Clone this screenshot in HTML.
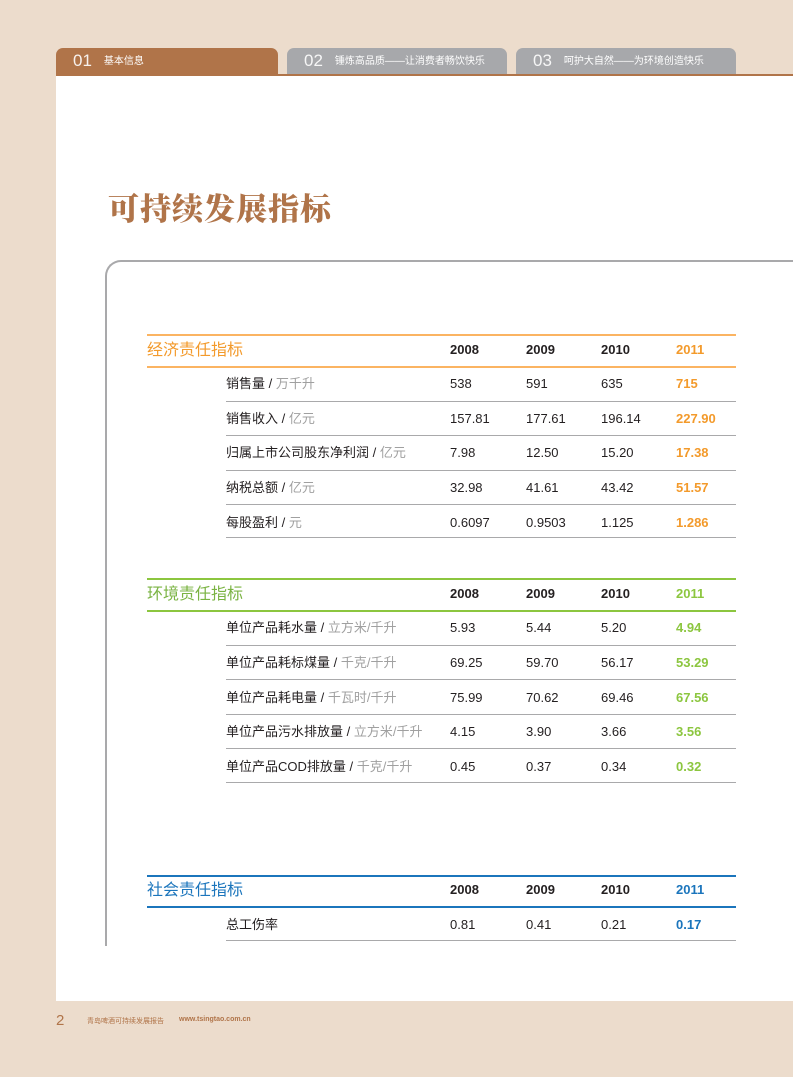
<!DOCTYPE html>
<html><head><meta charset="utf-8"><style>
*{margin:0;padding:0;box-sizing:border-box}
body{width:793px;height:1077px;background:#ecdccc;position:relative;overflow:hidden;font-family:"Liberation Sans","Noto Sans CJK SC",sans-serif;color:#231f20}
.a{position:absolute}
.white{left:56px;top:74px;width:737px;height:927px;background:#fff;border-top:2px solid #b07449}
.tab{top:48px;height:26px;border-radius:7px 7px 0 0;color:#fff;font-size:10px;line-height:26px;padding-left:17px;white-space:nowrap}
.tab b{font-weight:normal;font-size:17px;margin-right:12px;vertical-align:-2px;font-family:"Liberation Sans",sans-serif;opacity:.9}
.box{left:105px;top:260px;width:720px;height:686px;border:2px solid #a9a9ab;border-radius:16px 0 0 0;border-right:none;border-bottom:none}
.hl{left:147px;width:589px;height:1.5px}
.rl{left:226px;width:510px;height:1px;background:#a9a9ab}
.t{font-size:13px;line-height:16px;white-space:nowrap}
.h{font-size:13px;font-weight:bold}
.sec{font-size:16px;left:147px}
.g{color:#a0a0a0}
</style></head><body>
<div class="a white"></div>
<div class="a tab" style="left:56px;width:222px;background:#b07449"><b>01</b>基本信息</div>
<div class="a tab" style="left:287px;width:220px;background:#a7a8ab"><b>02</b>锤炼高品质——让消费者畅饮快乐</div>
<div class="a tab" style="left:516px;width:220px;background:#a7a8ab"><b>03</b>呵护大自然——为环境创造快乐</div>
<div class="a" style="left:108px;top:184px;font-family:'Noto Serif CJK SC',serif;font-weight:900;font-size:31px;color:#b07449;letter-spacing:1px">可持续发展指标</div>
<div class="a box"></div>

<div class="a hl" style="top:334px;background:#fbb462"></div>
<div class="a t sec" style="top:343px;color:#f39a2b">经济责任指标</div>
<div class="a t h" style="left:450px;top:342px">2008</div>
<div class="a t h" style="left:526px;top:342px">2009</div>
<div class="a t h" style="left:601px;top:342px">2010</div>
<div class="a t h" style="left:676px;top:342px;color:#f39a2b">2011</div>
<div class="a hl" style="top:366px;background:#fbb462"></div>

<div class="a t" style="left:226px;top:376px">销售量 / <span class="g">万千升</span></div>
<div class="a t" style="left:450px;top:376px">538</div><div class="a t" style="left:526px;top:376px">591</div><div class="a t" style="left:601px;top:376px">635</div><div class="a t h" style="left:676px;top:376px;color:#f39a2b">715</div>
<div class="a rl" style="top:401px"></div>
<div class="a t" style="left:226px;top:411px">销售收入 / <span class="g">亿元</span></div>
<div class="a t" style="left:450px;top:411px">157.81</div><div class="a t" style="left:526px;top:411px">177.61</div><div class="a t" style="left:601px;top:411px">196.14</div><div class="a t h" style="left:676px;top:411px;color:#f39a2b">227.90</div>
<div class="a rl" style="top:435px"></div>
<div class="a t" style="left:226px;top:445px">归属上市公司股东净利润 / <span class="g">亿元</span></div>
<div class="a t" style="left:450px;top:445px">7.98</div><div class="a t" style="left:526px;top:445px">12.50</div><div class="a t" style="left:601px;top:445px">15.20</div><div class="a t h" style="left:676px;top:445px;color:#f39a2b">17.38</div>
<div class="a rl" style="top:470px"></div>
<div class="a t" style="left:226px;top:480px">纳税总额 / <span class="g">亿元</span></div>
<div class="a t" style="left:450px;top:480px">32.98</div><div class="a t" style="left:526px;top:480px">41.61</div><div class="a t" style="left:601px;top:480px">43.42</div><div class="a t h" style="left:676px;top:480px;color:#f39a2b">51.57</div>
<div class="a rl" style="top:504px"></div>
<div class="a t" style="left:226px;top:515px">每股盈利 / <span class="g">元</span></div>
<div class="a t" style="left:450px;top:515px">0.6097</div><div class="a t" style="left:526px;top:515px">0.9503</div><div class="a t" style="left:601px;top:515px">1.125</div><div class="a t h" style="left:676px;top:515px;color:#f39a2b">1.286</div>
<div class="a rl" style="top:537px"></div>

<div class="a hl" style="top:578px;background:#8cc63f"></div>
<div class="a t sec" style="top:587px;color:#7ab342">环境责任指标</div>
<div class="a t h" style="left:450px;top:586px">2008</div>
<div class="a t h" style="left:526px;top:586px">2009</div>
<div class="a t h" style="left:601px;top:586px">2010</div>
<div class="a t h" style="left:676px;top:586px;color:#8cc63f">2011</div>
<div class="a hl" style="top:610px;background:#8cc63f"></div>

<div class="a t" style="left:226px;top:620px">单位产品耗水量 / <span class="g">立方米/千升</span></div>
<div class="a t" style="left:450px;top:620px">5.93</div><div class="a t" style="left:526px;top:620px">5.44</div><div class="a t" style="left:601px;top:620px">5.20</div><div class="a t h" style="left:676px;top:620px;color:#8cc63f">4.94</div>
<div class="a rl" style="top:645px"></div>
<div class="a t" style="left:226px;top:655px">单位产品耗标煤量 / <span class="g">千克/千升</span></div>
<div class="a t" style="left:450px;top:655px">69.25</div><div class="a t" style="left:526px;top:655px">59.70</div><div class="a t" style="left:601px;top:655px">56.17</div><div class="a t h" style="left:676px;top:655px;color:#8cc63f">53.29</div>
<div class="a rl" style="top:679px"></div>
<div class="a t" style="left:226px;top:690px">单位产品耗电量 / <span class="g">千瓦时/千升</span></div>
<div class="a t" style="left:450px;top:690px">75.99</div><div class="a t" style="left:526px;top:690px">70.62</div><div class="a t" style="left:601px;top:690px">69.46</div><div class="a t h" style="left:676px;top:690px;color:#8cc63f">67.56</div>
<div class="a rl" style="top:714px"></div>
<div class="a t" style="left:226px;top:724px">单位产品污水排放量 / <span class="g">立方米/千升</span></div>
<div class="a t" style="left:450px;top:724px">4.15</div><div class="a t" style="left:526px;top:724px">3.90</div><div class="a t" style="left:601px;top:724px">3.66</div><div class="a t h" style="left:676px;top:724px;color:#8cc63f">3.56</div>
<div class="a rl" style="top:748px"></div>
<div class="a t" style="left:226px;top:759px">单位产品COD排放量 / <span class="g">千克/千升</span></div>
<div class="a t" style="left:450px;top:759px">0.45</div><div class="a t" style="left:526px;top:759px">0.37</div><div class="a t" style="left:601px;top:759px">0.34</div><div class="a t h" style="left:676px;top:759px;color:#8cc63f">0.32</div>
<div class="a rl" style="top:782px"></div>

<div class="a hl" style="top:875px;background:#1b75bc"></div>
<div class="a t sec" style="top:883px;color:#1b75bc">社会责任指标</div>
<div class="a t h" style="left:450px;top:882px">2008</div>
<div class="a t h" style="left:526px;top:882px">2009</div>
<div class="a t h" style="left:601px;top:882px">2010</div>
<div class="a t h" style="left:676px;top:882px;color:#1b75bc">2011</div>
<div class="a hl" style="top:906px;background:#1b75bc"></div>
<div class="a t" style="left:226px;top:917px">总工伤率</div>
<div class="a t" style="left:450px;top:917px">0.81</div><div class="a t" style="left:526px;top:917px">0.41</div><div class="a t" style="left:601px;top:917px">0.21</div><div class="a t h" style="left:676px;top:917px;color:#1b75bc">0.17</div>
<div class="a rl" style="top:940px"></div>

<div class="a" style="left:56px;top:1012px;font-size:15px;color:#b07449">2</div>
<div class="a" style="left:87px;top:1016px;font-size:7px;color:#b07449">青岛啤酒可持续发展报告</div>
<div class="a" style="left:179px;top:1016px;font-size:7px;color:#b07449;font-weight:bold">www.tsingtao.com.cn</div>
</body></html>
